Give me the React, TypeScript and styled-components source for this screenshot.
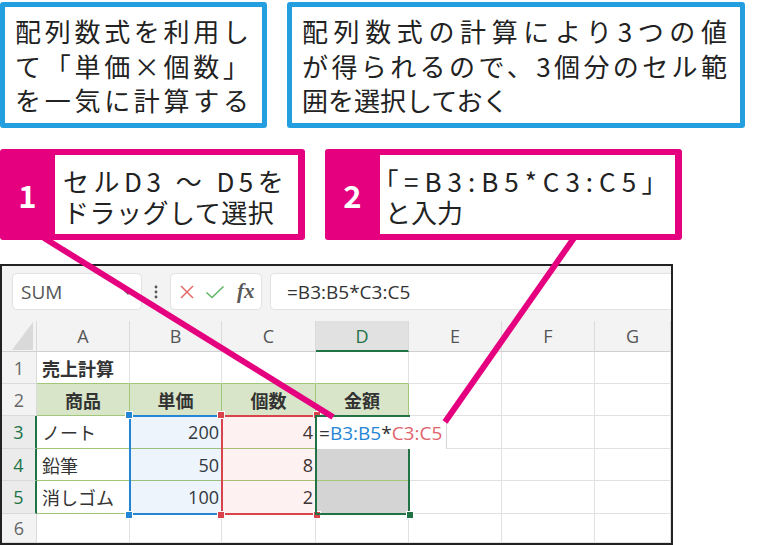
import { FC, ReactNode } from "react";
import styled, { createGlobalStyle } from "styled-components";

const MAGENTA = "#e4007f";
const NOTE_BLUE = "#239ede";
const JP = `"Noto Sans CJK JP", "Noto Sans", sans-serif`;
const SHEET_FONT = `"Open Sans", "Noto Sans CJK JP", sans-serif`;

const GRID_LINE = "#e1e1e1";
const TABLE_LINE = "#a3c77a";
const HEAD_FILL = "#d8e5c9";
const PICK_FILL = "#d4d4d4";
const EXCEL_GREEN = "#217346";
const REF_BLUE = "#2485d4";
const REF_RED = "#d9434b";

const GlobalStyle = createGlobalStyle`
	html, body { margin: 0; padding: 0; background: #fff; }
	body { font-family: ${JP}; }
`;

type Align = "left" | "center" | "right";
interface CellData {
	text?: ReactNode;
	align?: Align;
	bold?: boolean;
	fill?: string;
}

const COLS = ["A", "B", "C", "D", "E", "F", "G"];
const ROWS = [1, 2, 3, 4, 5, 6];

const cells: Record<string, CellData> = {
	"1-0": { text: "売上計算", bold: true },
	"2-0": { text: "商品", align: "center", bold: true, fill: HEAD_FILL },
	"2-1": { text: "単価", align: "center", bold: true, fill: HEAD_FILL },
	"2-2": { text: "個数", align: "center", bold: true, fill: HEAD_FILL },
	"2-3": { text: "金額", align: "center", bold: true, fill: HEAD_FILL },
	"3-0": { text: "ノート" },
	"3-1": { text: "200", align: "right" },
	"3-2": { text: "4", align: "right" },
	"4-0": { text: "鉛筆" },
	"4-1": { text: "50", align: "right" },
	"4-2": { text: "8", align: "right" },
	"4-3": { fill: PICK_FILL },
	"5-0": { text: "消しゴム" },
	"5-1": { text: "100", align: "right" },
	"5-2": { text: "2", align: "right" },
	"5-3": { fill: PICK_FILL },
};

// table A2:D5 has green rules, the rest of the sheet plain gridlines
const rightLine = (row: number, col: number) =>
	row >= 2 && row <= 5 && col <= 3 ? TABLE_LINE : GRID_LINE;
const bottomLine = (row: number, col: number) =>
	row >= 1 && row <= 5 && col <= 3 ? TABLE_LINE : GRID_LINE;

const App: FC = () => {
	return (
		<Page>
			<GlobalStyle />
			<NoteRow>
				<NoteBox $width={267}>
					<NoteLine $justify>配列数式を利用し</NoteLine>
					<NoteLine $justify>て「単価×個数」</NoteLine>
					<NoteLine $justify>を一気に計算する</NoteLine>
				</NoteBox>
				<NoteBox $width={458}>
					<NoteLine $justify>配列数式の計算により3つの値</NoteLine>
					<NoteLine $justify>が得られるので、3個分のセル範</NoteLine>
					<NoteLine>囲を選択しておく</NoteLine>
				</NoteBox>
			</NoteRow>

			<CalloutRow>
				<Callout $width={305}>
					<StepBadge>1</StepBadge>
					<CalloutText $left={8} $right={8}>
						<CalloutLine $spacing={4.5}>セルD3 ～ D5を</CalloutLine>
						<CalloutLine $spacing={0.5}>ドラッグして選択</CalloutLine>
					</CalloutText>
				</Callout>
				<Callout $width={357}>
					<StepBadge>2</StepBadge>
					<CalloutText $left={5} $right={8}>
						<CalloutLine $spacing={6} $palt>
							「=B3:B5*C3:C5」
						</CalloutLine>
						<CalloutLine>と入力</CalloutLine>
					</CalloutText>
				</Callout>
			</CalloutRow>

			<Sheet>
				<FormulaBar>
					<NameBox>
						<span>SUM</span>
						<svg width="10" height="10" viewBox="0 0 10 10">
							<path d="M1 3 L5 7 L9 3" fill="none" stroke="#666" strokeWidth="1.4" />
						</svg>
					</NameBox>
					<Grip>
						<svg width="4" height="14" viewBox="0 0 4 14">
							<circle cx="2" cy="2" r="1.4" fill="#555" />
							<circle cx="2" cy="7" r="1.4" fill="#555" />
							<circle cx="2" cy="12" r="1.4" fill="#555" />
						</svg>
					</Grip>
					<EditButtons>
						<svg width="16" height="16" viewBox="0 0 16 16">
							<path d="M2 2 L14 14 M14 2 L2 14" stroke="#e26b6b" strokeWidth="1.5" />
						</svg>
						<svg width="20" height="16" viewBox="0 0 20 16">
							<path d="M1.5 8.5 L7 13.5 L18.5 2.5" fill="none" stroke="#62b567" strokeWidth="1.6" />
						</svg>
						<Fx>fx</Fx>
					</EditButtons>
					<FormulaInput>=B3:B5*C3:C5</FormulaInput>
				</FormulaBar>

				<Grid>
					<Corner>
						<SelectAll />
					</Corner>
					{COLS.map((c, i) => (
						<ColHeader key={c} $col={i + 2} $active={i === 3}>
							{c}
						</ColHeader>
					))}
					{ROWS.map((r) => [
						<RowHeader key={`h${r}`} $row={r + 1} $active={r >= 3 && r <= 5}>
							{r}
						</RowHeader>,
						...COLS.map((c, i) => {
							const d = cells[`${r}-${i}`] || {};
							return (
								<Cell
									key={`${c}${r}`}
									$row={r + 1}
									$col={i + 2}
									$align={d.align || "left"}
									$bold={!!d.bold}
									$fill={d.fill || "#fff"}
									$right={rightLine(r, i)}
									$bottom={bottomLine(r, i)}
								>
									{d.text}
								</Cell>
							);
						}),
					])}

					<RangeBox $col={3} $color={REF_BLUE} $fill="rgba(36, 120, 210, 0.08)">
						<Handle $color={REF_BLUE} $x="left" $y="top" />
						<Handle $color={REF_BLUE} $x="left" $y="bottom" />
					</RangeBox>
					<RangeBox $col={4} $color={REF_RED} $fill="rgba(220, 50, 70, 0.07)">
						<Handle $color={REF_RED} $x="left" $y="top" />
						<Handle $color={REF_RED} $x="right" $y="top" />
						<Handle $color={REF_RED} $x="left" $y="bottom" />
						<Handle $color={REF_RED} $x="right" $y="bottom" />
					</RangeBox>
					<RangeBox $col={5} $color={EXCEL_GREEN} $fill="transparent">
						<Handle $color={EXCEL_GREEN} $x="right" $y="bottom" />
					</RangeBox>

					<CellEditor>
						=<RefText $color={REF_BLUE}>B3:B5</RefText>*
						<RefText $color="#e0646c">C3:C5</RefText>
					</CellEditor>
				</Grid>
			</Sheet>

			<Overlay width={783} height={545} viewBox="0 0 783 545">
				<line x1={44} y1={238} x2={333} y2={417} />
				<line x1={574} y1={238} x2={445} y2={422} />
			</Overlay>
		</Page>
	);
};

const Page = styled.div`
	position: relative;
	width: 783px;
	height: 545px;
	overflow: hidden;
	display: flex;
	flex-direction: column;
	background: #fff;
`;

const NoteRow = styled.div`
	display: flex;
	gap: 20px;
	margin-top: 2px;
	height: 126px;
`;

const NoteBox = styled.div<{ $width: number }>`
	width: ${(p) => p.$width}px;
	box-sizing: border-box;
	border: 5px solid ${NOTE_BLUE};
	border-radius: 3px;
	padding: 7px 13px 0 10px;
	font-family: ${JP};
	font-size: 26px;
	line-height: 34.5px;
	color: #222;
`;

const NoteLine = styled.div<{ $justify?: boolean }>`
	white-space: nowrap;
	text-align: ${(p) => (p.$justify ? "justify" : "left")};
	text-align-last: ${(p) => (p.$justify ? "justify" : "left")};
`;

const CalloutRow = styled.div`
	display: flex;
	gap: 20px;
	margin-top: 21px;
	height: 91px;
`;

const Callout = styled.div<{ $width: number }>`
	width: ${(p) => p.$width}px;
	box-sizing: border-box;
	display: flex;
	background: ${MAGENTA};
	border-radius: 3px;
	padding: 6px 7px 6px 0;
`;

const StepBadge = styled.div`
	flex: none;
	width: 55px;
	display: flex;
	align-items: center;
	justify-content: center;
	color: #fff;
	font-family: ${JP};
	font-weight: 700;
	font-size: 31px;
`;

const CalloutText = styled.div<{ $left: number; $right: number }>`
	flex: 1;
	background: #fff;
	display: flex;
	flex-direction: column;
	justify-content: center;
	padding: 3px ${(p) => p.$right}px 0 ${(p) => p.$left}px;
	font-family: ${JP};
	font-size: 26px;
	line-height: 31px;
	color: #222;
`;

const CalloutLine = styled.div<{ $spacing?: number; $palt?: boolean }>`
	white-space: nowrap;
	font-feature-settings: ${(p) => (p.$palt ? `"palt"` : "normal")};
	letter-spacing: ${(p) => p.$spacing || 0}px;
`;

const Sheet = styled.div`
	margin-top: 24px;
	width: 673px;
	height: 281px;
	box-sizing: border-box;
	border: 2px solid #222;
	display: flex;
	flex-direction: column;
	font-family: ${SHEET_FONT};
	background: #fff;
`;

const FormulaBar = styled.div`
	flex: none;
	height: 55px;
	box-sizing: border-box;
	display: flex;
	align-items: flex-start;
	padding: 7px 0 0 10px;
	background: #f3f3f3;
`;

const NameBox = styled.div`
	width: 130px;
	height: 37px;
	box-sizing: border-box;
	display: flex;
	align-items: center;
	justify-content: space-between;
	padding: 0 8px 0 8px;
	background: #fff;
	border: 1px solid #e2e2e2;
	border-radius: 5px;
	font-size: 19px;
	color: #555;
`;

const Grip = styled.div`
	width: 28px;
	height: 37px;
	display: flex;
	align-items: center;
	justify-content: center;
`;

const EditButtons = styled.div`
	width: 92px;
	height: 37px;
	box-sizing: border-box;
	display: flex;
	align-items: center;
	gap: 10px;
	padding-left: 8px;
	background: #fff;
	border: 1px solid #e2e2e2;
	border-radius: 5px;
`;

const Fx = styled.span`
	font-family: "Liberation Serif", "DejaVu Serif", serif;
	font-style: italic;
	font-weight: 700;
	font-size: 21px;
	color: #5a5a5a;
	margin-left: 2px;
`;

const FormulaInput = styled.div`
	flex: 1;
	height: 37px;
	box-sizing: border-box;
	margin-left: 8px;
	display: flex;
	align-items: center;
	padding-left: 16px;
	background: #fff;
	border: 1px solid #e2e2e2;
	border-right: none;
	border-radius: 5px 0 0 5px;
	font-size: 19px;
	color: #333;
`;

const Grid = styled.div`
	flex: 1;
	display: grid;
	grid-template-columns: 35px 93px 92px 94px 93px 93px 93px 1fr;
	grid-template-rows: 31px 32px 32px 33px 32px 33px 1fr;
	font-size: 18px;
	color: #333;
`;

const Corner = styled.div`
	grid-row: 1;
	grid-column: 1;
	display: flex;
	align-items: flex-end;
	justify-content: flex-end;
	padding: 0 3px 1px 0;
	background: #f3f3f3;
	border-right: 1px solid #dadada;
	border-bottom: 1px solid #d0d0d0;
`;

const SelectAll = styled.div`
	width: 21px;
	height: 28px;
	background: #d9d9d9;
	clip-path: polygon(100% 0, 100% 100%, 0 100%);
`;

const ColHeader = styled.div<{ $col: number; $active: boolean }>`
	grid-row: 1;
	grid-column: ${(p) => p.$col};
	display: flex;
	align-items: center;
	justify-content: center;
	background: ${(p) => (p.$active ? "#e1e1e1" : "#f3f3f3")};
	color: ${(p) => (p.$active ? EXCEL_GREEN : "#555")};
	border-right: 1px solid #dadada;
	border-bottom: ${(p) =>
		p.$active ? `2px solid ${EXCEL_GREEN}` : "1px solid #d0d0d0"};
`;

const RowHeader = styled.div<{ $row: number; $active: boolean }>`
	grid-row: ${(p) => p.$row};
	grid-column: 1;
	display: flex;
	align-items: center;
	justify-content: center;
	background: ${(p) => (p.$active ? "#ebebeb" : "#f3f3f3")};
	color: ${(p) => (p.$active ? EXCEL_GREEN : "#666")};
	border-bottom: 1px solid #dadada;
	border-right: ${(p) =>
		p.$active ? `2px solid ${EXCEL_GREEN}` : "1px solid #dadada"};
`;

const Cell = styled.div<{
	$row: number;
	$col: number;
	$align: Align;
	$bold: boolean;
	$fill: string;
	$right: string;
	$bottom: string;
}>`
	grid-row: ${(p) => p.$row};
	grid-column: ${(p) => p.$col};
	display: flex;
	align-items: center;
	justify-content: ${(p) =>
		p.$align === "right" ? "flex-end" : p.$align === "center" ? "center" : "flex-start"};
	padding: 0 ${(p) => (p.$align === "right" ? "2px" : "5px")};
	background: ${(p) => p.$fill};
	border-right: 1px solid ${(p) => p.$right};
	border-bottom: 1px solid ${(p) => p.$bottom};
	font-weight: ${(p) => (p.$bold ? 700 : 400)};
	white-space: nowrap;
	overflow: visible;
	min-width: 0;
`;

const RangeBox = styled.div<{ $col: number; $color: string; $fill: string }>`
	grid-row: 4 / 7;
	grid-column: ${(p) => p.$col} / span 1;
	margin: -1px;
	border: 2px solid ${(p) => p.$color};
	background: ${(p) => p.$fill};
	position: relative;
	z-index: 2;
	pointer-events: none;
`;

const Handle = styled.span<{
	$color: string;
	$x: "left" | "right";
	$y: "top" | "bottom";
}>`
	position: absolute;
	${(p) => p.$x}: -6px;
	${(p) => p.$y}: -6px;
	width: 6px;
	height: 6px;
	background: ${(p) => p.$color};
	border: 1px solid #fff;
	z-index: 3;
`;

const CellEditor = styled.div`
	grid-row: 4;
	grid-column: 5;
	justify-self: start;
	width: max-content;
	margin: 1px 0 0 1px;
	padding: 0 4px 0 2px;
	display: flex;
	align-items: center;
	background: #fff;
	border-right: 1px solid #d6d6d6;
	font-size: 19px;
	color: #333;
	white-space: nowrap;
	position: relative;
	z-index: 4;
`;

const RefText = styled.span<{ $color: string }>`
	color: ${(p) => p.$color};
`;

const Overlay = styled.svg`
	position: absolute;
	left: 0;
	top: 0;
	pointer-events: none;
	z-index: 10;

	line {
		stroke: ${MAGENTA};
		stroke-width: 6;
	}
`;

export default App;
